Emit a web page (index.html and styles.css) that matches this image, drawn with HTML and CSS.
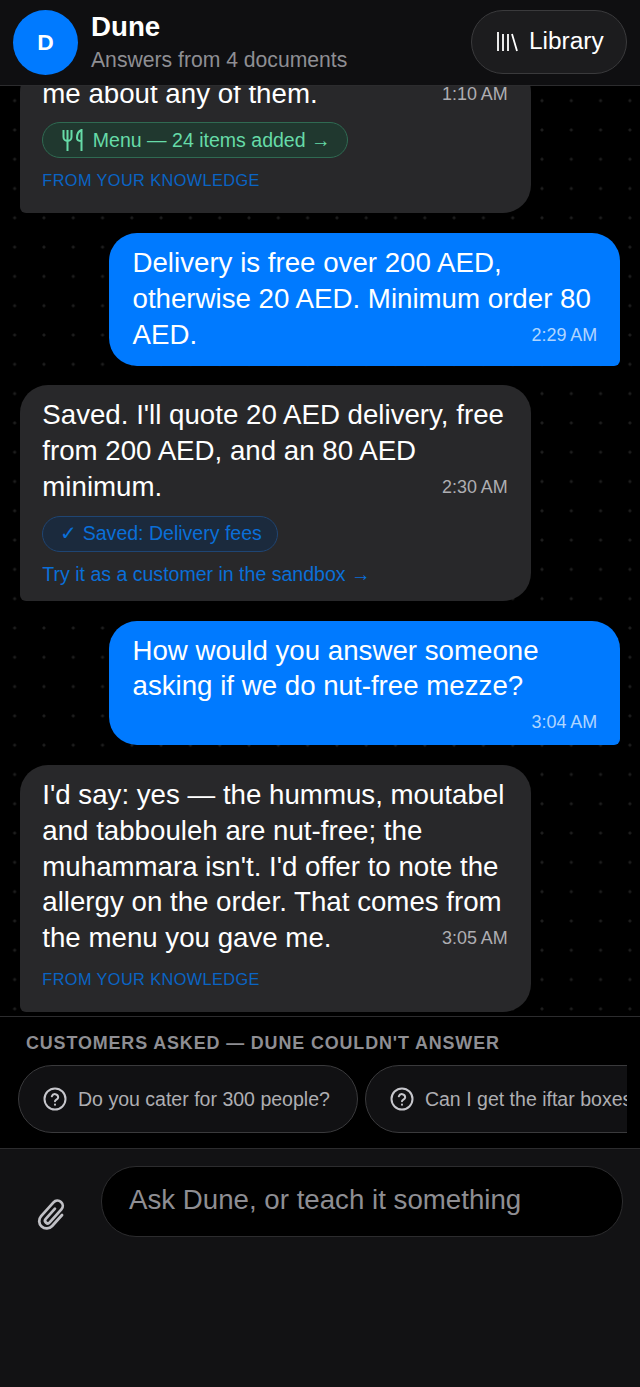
FILE: index.html
```html
<!DOCTYPE html>
<html lang="en">
<head>
<meta charset="utf-8">
<title>Dune</title>
<link rel="stylesheet" href="styles.css">
</head>
<body>
<div class="app">
  <header class="header">
    <div class="avatar">D</div>
    <div class="title">
      <div class="name">Dune</div>
      <div class="sub">Answers from 4 documents</div>
    </div>
    <button class="library">
      <svg class="library-icon" viewBox="0 0 24 24" fill="none" stroke="currentColor" stroke-width="1.800"><path d="M3 3v19M8 5v17M13 5v17M17 5l5 17"/></svg>
      <span>Library</span>
    </button>
  </header>
  <main class="messages">
    <div class="bubble agent">
      <p class="text">me about any of them.<span class="time">1:10 AM</span></p>
      <div class="pill pill-green">
        <svg class="fork" viewBox="0 0 21 22" fill="none" stroke="currentColor" stroke-width="2"><path d="M1.500 1v7a4 4 0 0 0 8 0V1M5.500 1v21M19.500 22V1c-3 1-4.500 4-4.500 8 0 2 1.500 3 4.500 3"/></svg>
        <span>Menu — 24 items added →</span>
      </div>
      <div class="source">FROM YOUR KNOWLEDGE</div>
    </div>
    <div class="bubble user">
      <p class="text">Delivery is free over 200 AED, otherwise 20 AED. Minimum order 80 AED.<span class="time">2:29 AM</span></p>
    </div>
    <div class="bubble agent">
      <p class="text">Saved. I'll quote 20 AED delivery, free from 200 AED, and an 80 AED minimum.<span class="time">2:30 AM</span></p>
      <div class="pill pill-blue">✓ Saved: Delivery fees</div>
      <div class="try">Try it as a customer in the sandbox →</div>
    </div>
    <div class="bubble user">
      <p class="text">How would you answer someone asking if we do nut-free mezze?<span class="time">3:04 AM</span></p>
    </div>
    <div class="bubble agent">
      <p class="text">I'd say: yes — the hummus, moutabel and tabbouleh are nut-free; the muhammara isn't. I'd offer to note the allergy on the order. That comes from the menu you gave me.<span class="time">3:05 AM</span></p>
      <div class="source">FROM YOUR KNOWLEDGE</div>
    </div>
  </main>
  <section class="asked">
    <div class="asked-label">CUSTOMERS ASKED — DUNE COULDN'T ANSWER</div>
    <div class="chips">
      <div class="chip">
        <svg class="q" viewBox="0 0 24 24" fill="none" stroke="currentColor" stroke-width="2" stroke-linecap="round"><circle cx="12" cy="12" r="10.500"/><path d="M8.800 9.300a3.300 3.300 0 0 1 6.400 1c0 2.200-3.200 2.400-3.200 4"/><path d="M12 17.600v.1"/></svg>
        <span>Do you cater for 300 people?</span>
      </div>
      <div class="chip">
        <svg class="q" viewBox="0 0 24 24" fill="none" stroke="currentColor" stroke-width="2" stroke-linecap="round"><circle cx="12" cy="12" r="10.500"/><path d="M8.800 9.300a3.300 3.300 0 0 1 6.400 1c0 2.200-3.200 2.400-3.200 4"/><path d="M12 17.600v.1"/></svg>
        <span>Can I get the iftar boxes delivered?</span>
      </div>
    </div>
  </section>
  <footer class="composer">
    <svg class="clip" viewBox="-1 -2 34 34" fill="none" stroke="currentColor" stroke-width="2.600" stroke-linecap="round" stroke-linejoin="round"><path transform="rotate(42 16 15)" d="M23 10V24A7 7 0 0 1 9 24V6.500A5 5 0 0 1 19 6.500V23A2.500 2.500 0 0 1 14 23V10"/></svg>
    <div class="input">Ask Dune, or teach it something</div>
  </footer>
</div>
</body>
</html>
```
FILE: styles.css
```css
* { box-sizing: border-box; }
html, body { margin: 0; height: 100%; background: #000; }
body { font-family: "Liberation Sans", Arial, sans-serif; color: #fff; }
.app { width: 640px; height: 1387px; display: flex; flex-direction: column; overflow: hidden; }

.header { height: 86px; flex: none; display: flex; align-items: flex-start; background: #0f0f11; border-bottom: 1px solid #2c2c2e; padding: 10px 13px 0; }
.avatar { width: 65px; height: 65px; border-radius: 50%; background: #007aff; display: flex; align-items: center; justify-content: center; font-size: 22.800px; font-weight: 700; flex: none; }
.title { margin-left: 13px; flex: 1; }
.name { font-size: 27.680px; font-weight: 700; line-height: 34px; }
.sub { font-size: 21.170px; line-height: 30px; margin-top: 1px; color: #8e8e93; }
.library { width: 156px; height: 64px; border-radius: 32px; background: #1c1c1e; border: 1px solid #3a3a3c; color: #fff; font: 24.430px "Liberation Sans", Arial, sans-serif; display: flex; align-items: center; justify-content: flex-start; gap: 10px; padding: 0 0 3px 23px; }
.library-icon { width: 24px; height: 24px; }

.messages { height: 930px; flex: none; overflow: hidden; display: flex; flex-direction: column; justify-content: flex-end; gap: 19.700px; padding: 0 20px 4px 19.500px; background-color: #000; background-image: radial-gradient(circle, #1e1e1e 1px, transparent 2px); background-size: 29.310px 29.310px; }
.bubble { width: 511px; flex: none; padding: 12px 22.800px 13px; border-radius: 28px; }
.agent { align-self: flex-start; background: #28282a; border-bottom-left-radius: 6px; }
.user { align-self: flex-end; background: #007aff; border-bottom-right-radius: 6px; padding-left: 23.500px; }
.text { margin: 0; font-size: 27.680px; line-height: 35.830px; }
.text::after { content: ""; display: block; clear: both; }
.time { float: right; font-size: 17.910px; line-height: 20px; margin-top: 8px; margin-left: 10px; color: #aeaeb2; }
.user .time { color: rgba(255,255,255,.7); }

.pill { display: inline-flex; align-items: center; height: 36px; border-radius: 18px; font-size: 19.540px; border: 1px solid; margin-top: 11px; vertical-align: top; }
.pill-green { color: #66dba8; background: #20382f; border-color: #2f6a52; padding: 0 16px 0 18.500px; }
.pill-blue { color: #0a6fd8; background: #1b2a3d; border-color: #1f4573; padding: 0 15px 0 17px; }
.fork { width: 21px; height: 22px; margin-right: 10px; }
.source { margin: 12px 0 10px; font-size: 16.290px; line-height: 20px; letter-spacing: .42px; color: #0a64c4; }
.text + .source { margin: 13px 0 10px; }
.try { margin: 10px 0 2px; font-size: 19.540px; line-height: 24px; color: #0a6fd8; }

.asked { height: 132px; flex: none; background: #000; border-top: 1px solid #2c2c2e; }
.asked-label { margin: 15px 0 0 26px; font-size: 17.910px; font-weight: 700; line-height: 22px; letter-spacing: .88px; color: #8e8e93; }
.chips { display: flex; gap: 7px; margin: 11px 0 0 18px; width: 609px; overflow-x: auto; scrollbar-width: none; }
.chip { flex: none; height: 68px; border-radius: 34px; background: #111113; border: 1px solid #3a3a3c; display: flex; align-items: center; gap: 11px; padding: 0 27px 0 24px; font-size: 19.540px; color: #aeaeb2; }
.q { width: 24px; height: 24px; color: #c7c7cc; }

.composer { flex: 1; background: #121214; border-top: 1px solid #2c2c2e; display: flex; align-items: flex-start; padding: 17px 17px 0 35px; }
.clip { width: 36px; height: 36px; color: #c0c0c5; margin-top: 30px; flex: none; }
.input { margin-left: 30px; width: 522px; height: 71px; border-radius: 35px; background: #000; border: 1px solid #2c2c2e; font-size: 27.680px; color: #8e8e93; padding: 0 27px 3px; display: flex; align-items: center; }
```
